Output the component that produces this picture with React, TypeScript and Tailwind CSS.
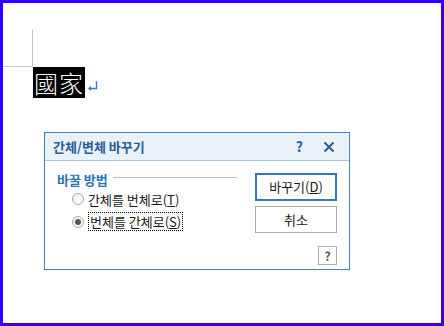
const font = { fontFamily: '"Noto Sans CJK KR", "Noto Sans", sans-serif' };

const Radio = ({ checked }: { checked?: boolean }) => (
    <span className="w-[12px] h-[12px] rounded-full border border-[#a6a6a6] bg-gradient-to-br from-[#f0f0f0] to-white flex items-center justify-center">
        {checked && <span className="w-[6px] h-[6px] rounded-full bg-[#555555]" />}
    </span>
);

const App = () => {
    return (
        <div className="w-[444px] h-[326px] border-[3px] border-[#3300ff] bg-white flex flex-col" style={font}>
            <div className="flex">
                <div className="w-[30px] h-[37px] mt-[27px] border-r border-b border-[#c6c6c6]" />
            </div>

            <div className="flex items-end pl-[30px]">
                <span
                    className="bg-black text-white h-[31px] w-[52px] flex items-center justify-center text-[24px] font-light tracking-[1px] leading-none"
                    style={{ fontFamily: '"Noto Sans CJK TC", "Noto Sans CJK KR", sans-serif' }}
                >
                    國家
                </span>
                <svg className="ml-[2px] mb-[7px]" width="11" height="10" viewBox="0 0 11 10">
                    <path d="M9.5 0.5 V7.5 H2" stroke="#3a6fd8" strokeWidth="1.4" fill="none" />
                    <path d="M1 7.5 L4 5 L4 10 Z" fill="#3a6fd8" />
                </svg>
            </div>

            <div className="ml-[41px] mt-[34px] w-[306px] h-[138px] border border-[#3f7fc4] flex flex-col bg-white">
                <div className="h-[28px] bg-[#e9f1f9] border-b border-[#a9c6e3] flex items-center pl-[8px] pr-[14px]">
                    <span className="text-[13px] font-bold text-[#2b5d94] flex-1">간체/변체 바꾸기</span>
                    <span className="text-[14px] font-bold text-[#2b5d94] mr-[20px]">?</span>
                    <svg width="12" height="12" viewBox="0 0 12 12">
                        <path d="M1.5 1.5 L10.5 10.5 M10.5 1.5 L1.5 10.5" stroke="#2b5d94" strokeWidth="2" />
                    </svg>
                </div>

                <div className="flex-1 flex pl-[12px] pr-[12px] pt-[12px] justify-between">
                    <div className="w-[180px] flex flex-col">
                        <div className="flex items-center h-[14px] mt-[-1px]">
                            <span className="text-[13px] font-bold text-[#2e75b6] leading-none">바꿀 방법</span>
                            <span className="flex-1 h-px bg-[#bdbdbd] ml-[5px] mt-[-4px]" />
                        </div>
                        <div className="flex items-center gap-[4px] ml-[15px] mt-[4px] h-[18px]">
                            <Radio />
                            <span className="text-[13px] text-[#1a1a1a] leading-none">간체를 번체로(<span className="underline">T</span>)</span>
                        </div>
                        <div className="flex items-center gap-[4px] ml-[15px] mt-[4px] h-[19px]">
                            <Radio checked />
                            <span className="text-[13px] text-[#1a1a1a] leading-none border border-dotted border-black px-[1px] py-[2px]">
                                번체를 간체로(<span className="underline">S</span>)
                            </span>
                        </div>
                    </div>

                    <div className="w-[82px] flex flex-col">
                        <button className="h-[28px] border-2 border-[#3178c6] bg-white text-[13px] text-[#1a1a1a]">
                            바꾸기(<span className="underline">D</span>)
                        </button>
                        <button className="h-[27px] mt-[5px] border border-[#adadad] bg-white text-[13px] text-[#1a1a1a]">
                            취소
                        </button>
                        <button className="w-[19px] h-[19px] mt-[13px] self-end border border-[#adadad] bg-white text-[12px] font-bold text-[#555555] flex items-center justify-center leading-none">
                            ?
                        </button>
                    </div>
                </div>
            </div>
        </div>
    );
};

export default App;
